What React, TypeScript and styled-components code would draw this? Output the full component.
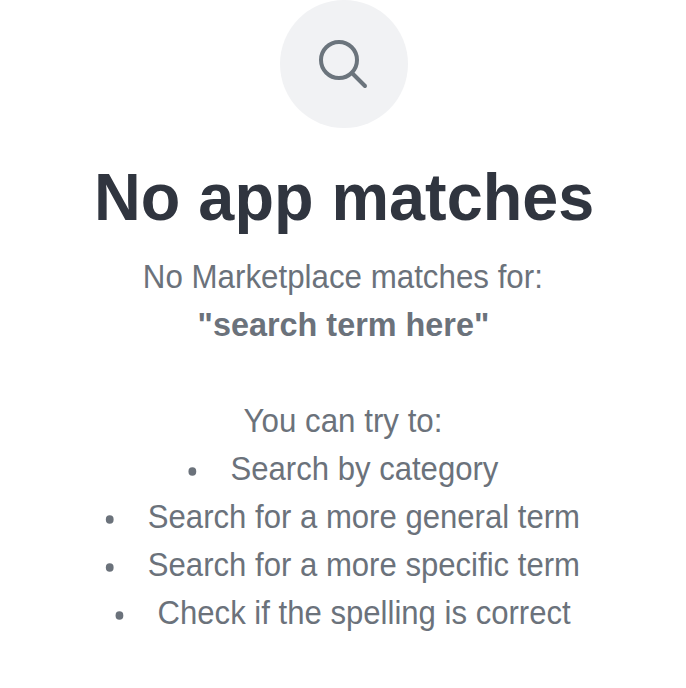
import React from "react";
import styled, { createGlobalStyle } from "styled-components";

const GlobalStyle = createGlobalStyle`
  body {
    margin: 0;
    background: #ffffff;
  }
`;

const EmptyState = styled.main`
  display: flex;
  flex-direction: column;
  align-items: center;
  width: 686px;
  height: 688px;
  overflow: hidden;
  font-family: "Liberation Sans", Arial, sans-serif;
  color: #6b727b;
`;

const IconCircle = styled.div`
  display: flex;
  flex: none;
  align-items: center;
  justify-content: center;
  width: 128px;
  height: 128px;
  margin-left: 2px;
  border-radius: 50%;
  background: #f1f2f4;
`;

const Title = styled.h1`
  margin: 32px 0 0;
  font-size: 64px;
  line-height: 76px;
  font-weight: 700;
  color: #30353f;
  white-space: nowrap;
  transform: translate(1px, -1px) scale(1.012, 1.05);
`;

const Line = styled.p<{ $strong?: boolean; $gap?: number }>`
  margin: ${({ $gap = 0 }) => $gap}px 0 0;
  font-size: 32px;
  line-height: 48px;
  font-weight: ${({ $strong }) => ($strong ? 700 : 400)};
  white-space: nowrap;
  transform: translate(0.3px, -1.6px) scale(${({ $strong }) => ($strong ? 1.012 : 0.978)}, 1.055);
`;

const Tips = styled.ul`
  display: flex;
  flex-direction: column;
  align-items: center;
  margin: 0;
  padding: 0;
  list-style: none;
`;

const Tip = styled.li`
  display: flex;
  align-items: center;
  gap: 35px;
  font-size: 32px;
  line-height: 48px;
  white-space: nowrap;
  transform: translateY(-1.6px) scale(0.972, 1.055);

  &::before {
    content: "";
    width: 8.2px;
    height: 8px;
    margin-top: 6px;
    border-radius: 50%;
    background: currentColor;
  }
`;

const tips = [
  "Search by category",
  "Search for a more general term",
  "Search for a more specific term",
  "Check if the spelling is correct",
];

export default function App() {
  return (
    <EmptyState>
      <GlobalStyle />
      <IconCircle>
        <svg width="64" height="64" viewBox="0 0 64 64" fill="none" stroke="#6b747c" strokeWidth="4" strokeLinecap="round">
          <circle cx="27" cy="28" r="18" />
          <path d="M40 41 L53 54" />
        </svg>
      </IconCircle>
      <Title>No app matches</Title>
      <Line $gap={18}>No Marketplace matches for:</Line>
      <Line $strong>"search term here"</Line>
      <Line $gap={48}>You can try to:</Line>
      <Tips>
        {tips.map((tip) => (
          <Tip key={tip}>{tip}</Tip>
        ))}
      </Tips>
    </EmptyState>
  );
}
